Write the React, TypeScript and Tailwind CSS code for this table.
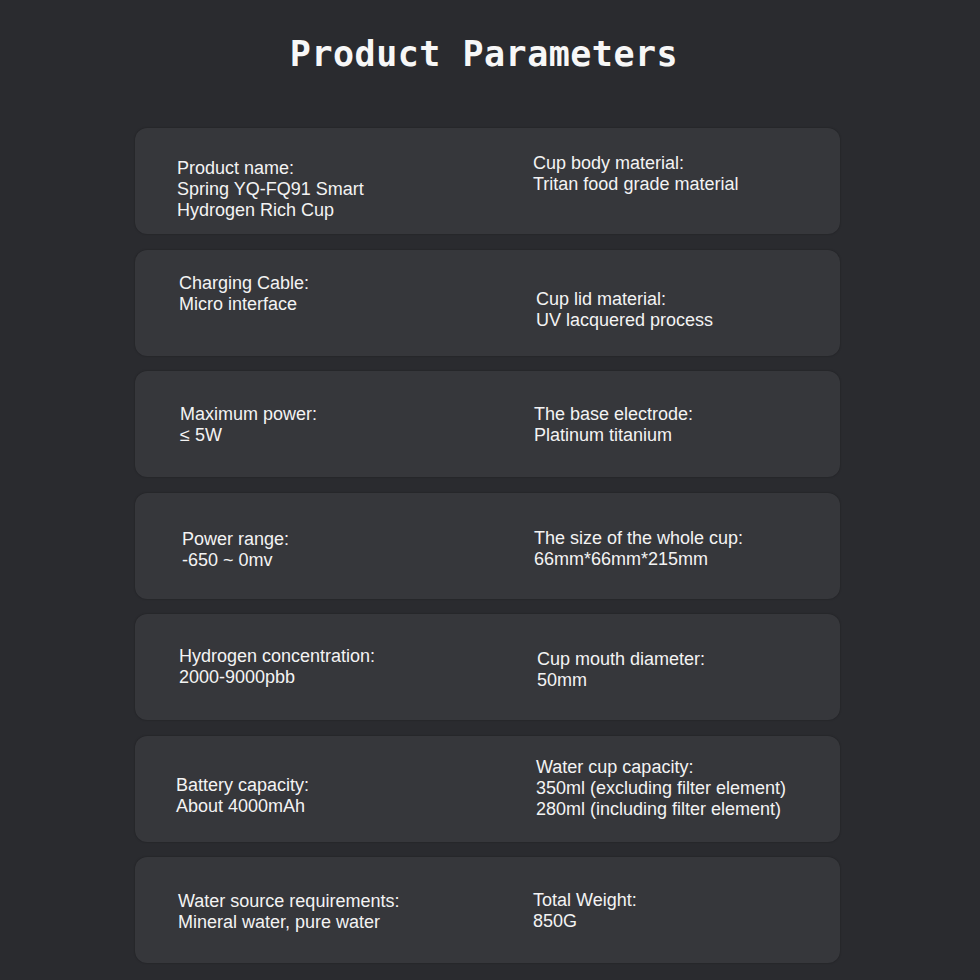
import React from "react";

type Cell = { lines: string[]; x: number; y: number };
type Row = { left: Cell; right: Cell };

const rows: Row[] = [
  {
    left: { lines: ["Product name:", "Spring YQ-FQ91 Smart", "Hydrogen Rich Cup"], x: 42, y: 29.5 },
    right: { lines: ["Cup body material:", "Tritan food grade material"], x: 43, y: 25 },
  },
  {
    left: { lines: ["Charging Cable:", "Micro interface"], x: 44, y: 23.5 },
    right: { lines: ["Cup lid material:", "UV lacquered process"], x: 46, y: 39.5 },
  },
  {
    left: { lines: ["Maximum power:", "≤ 5W"], x: 45, y: 32.5 },
    right: { lines: ["The base electrode:", "Platinum titanium"], x: 44, y: 32.5 },
  },
  {
    left: { lines: ["Power range:", "-650 ~ 0mv"], x: 47, y: 36.5 },
    right: { lines: ["The size of the whole cup:", "66mm*66mm*215mm"], x: 44, y: 35.5 },
  },
  {
    left: { lines: ["Hydrogen concentration:", "2000-9000pbb"], x: 44, y: 31.5 },
    right: { lines: ["Cup mouth diameter:", "50mm"], x: 47, y: 34.5 },
  },
  {
    left: { lines: ["Battery capacity:", "About 4000mAh"], x: 41, y: 39.5 },
    right: {
      lines: ["Water cup capacity:", "350ml (excluding filter element)", "280ml (including filter element)"],
      x: 46,
      y: 21.5,
    },
  },
  {
    left: { lines: ["Water source requirements:", "Mineral water, pure water"], x: 43, y: 33.5 },
    right: { lines: ["Total Weight:", "850G"], x: 43, y: 32.5 },
  },
];

function CellView({ cell }: { cell: Cell }) {
  return (
    <div style={{ paddingLeft: cell.x, paddingTop: cell.y }}>
      {cell.lines.map((l, i) => (
        <div key={i} className="text-[18px] leading-[21px] text-[#f3f3f3] whitespace-nowrap">
          {l}
        </div>
      ))}
    </div>
  );
}

export default function App() {
  return (
    <div
      className="w-[980px] h-[980px] bg-[#2a2b2f] overflow-hidden"
      style={{ fontFamily: '"Liberation Sans", Arial, sans-serif' }}
    >
      <div className="pt-[34px] pr-[12px] flex justify-center">
        <h1
          className="text-[35px] leading-[40px] font-bold text-[#f7f7f7] tracking-[0.5px]"
          style={{ fontFamily: '"DejaVu Sans Mono", monospace' }}
        >
          Product Parameters
        </h1>
      </div>
      <div className="ml-[135px] w-[705px] mt-[54px] flex flex-col gap-[15.5px]">
        {rows.map((r, i) => (
          <div
            key={i}
            className="h-[106px] rounded-[12px] bg-[#36373b] shadow-[0_0_2px_rgba(0,0,0,0.35)] grid grid-cols-[355px_1fr]"
          >
            <CellView cell={r.left} />
            <CellView cell={r.right} />
          </div>
        ))}
      </div>
    </div>
  );
}
